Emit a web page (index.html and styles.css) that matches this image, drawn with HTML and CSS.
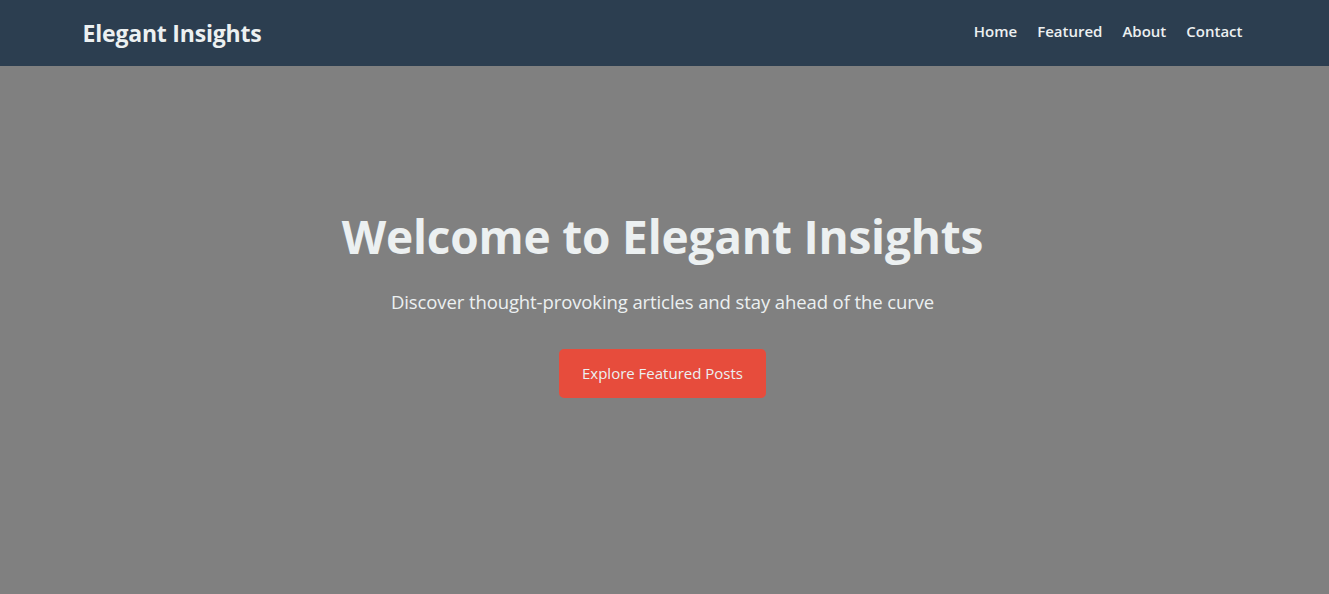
FILE: index.html
```html
<!DOCTYPE html>
<html lang="en">
<head>
<meta charset="utf-8">
<title>Elegant Insights</title>
<link rel="stylesheet" href="styles.css">
</head>
<body>
<header class="site-header">
  <div class="container header-inner">
    <a class="logo" href="#">Elegant Insights</a>
    <nav class="nav">
      <a href="#">Home</a>
      <a href="#">Featured</a>
      <a href="#">About</a>
      <a href="#">Contact</a>
    </nav>
  </div>
</header>
<section class="hero">
  <div class="hero-content">
    <h1 class="hero-title">Welcome to Elegant Insights</h1>
    <p class="hero-sub">Discover thought-provoking articles and stay ahead of the curve</p>
    <a class="btn" href="#">Explore Featured Posts</a>
  </div>
</section>
</body>
</html>
```
FILE: styles.css
```css
* { box-sizing: border-box; }
html, body { margin: 0; padding: 0; }
body {
  font-family: "Open Sans", "Noto Sans", "Liberation Sans", sans-serif;
  background: #808080;
  color: #ecf0f1;
  overflow: hidden;
}
a { text-decoration: none; color: inherit; }
.site-header {
  background: #2c3e50;
  height: 66px;
}
.container {
  max-width: 1200px;
  margin: 0 auto;
  padding: 0 20px;
}
.header-inner {
  height: 100%;
  display: flex;
  align-items: center;
  justify-content: space-between;
  padding-left: 18px;
  padding-right: 22px;
}
.logo {
  font-size: 23px;
  font-weight: 700;
  color: #ecf0f1;
  letter-spacing: -0.2px;
}
.nav {
  display: flex;
  gap: 20px;
  margin-top: -4px;
}
.nav a {
  font-size: 15px;
  font-weight: 600;
  color: #ecf0f1;
}
.hero {
  height: 528px;
  background: #808080;
  display: flex;
  justify-content: center;
  padding-top: 138px;
  padding-right: 4px;
}
.hero-content {
  text-align: center;
}
.hero-title {
  margin: 0;
  font-size: 46px;
  font-weight: 700;
  line-height: 64px;
  letter-spacing: -0.2px;
  color: #ecf0f1;
}
.hero-sub {
  margin: 20px 0 33px;
  font-size: 18.5px;
  line-height: 28px;
  letter-spacing: -0.1px;
}
.btn {
  display: inline-block;
  background: #e74c3c;
  color: #ecf0f1;
  font-size: 15px;
  line-height: 25px;
  padding: 12px 23px;
  min-height: 49px;
  border-radius: 5px;
}
```
